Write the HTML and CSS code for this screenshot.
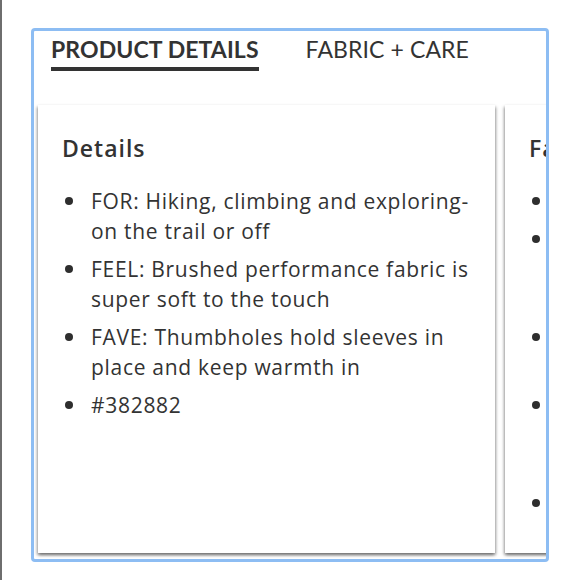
FILE: index.html
```html
<!DOCTYPE html>
<html>
<head>
<meta charset="utf-8">
<link rel="stylesheet" href="styles.css">
</head>
<body>
<div class="page">
  <div class="frame">
    <div class="tabs">
      <div class="tab active">PRODUCT DETAILS</div>
      <div class="tab">FABRIC + CARE</div>
    </div>
    <div class="cards">
      <div class="card">
        <h2 class="card-title">Details</h2>
        <ul class="list">
          <li>FOR: Hiking, climbing and exploring- on the trail or off</li>
          <li>FEEL: Brushed performance fabric is super soft to the touch</li>
          <li>FAVE: Thumbholes hold sleeves in place and keep warmth in</li>
          <li>#382882</li>
        </ul>
      </div>
      <div class="card">
        <h2 class="card-title">Fabric</h2>
        <ul class="list">
          <li>Nylon/spandex</li>
          <li>Brushed performance fabric with four-way stretch moves with you and feels soft on skin all day</li>
          <li>Wicks sweat and dries quickly to keep you comfy</li>
          <li>Flatlock seams reduce chafing and add comfort while you move around the trail</li>
          <li>Machine wash</li>
        </ul>
      </div>
    </div>
  </div>
</div>
</body>
</html>
```

FILE: styles.css
```css
html, body {
  margin: 0;
  padding: 0;
  background: #ffffff;
}
body {
  font-family: Lato, "Open Sans", sans-serif;
  color: #333333;
}
.page {
  width: 578px;
  height: 580px;
  border-left: 2px solid #6e6e6e;
  padding: 28px 0 0 29px;
  box-sizing: border-box;
}
.frame {
  width: 518px;
  height: 534px;
  box-sizing: border-box;
  border: 3px solid #8dbdf3;
  border-radius: 4px;
  overflow: hidden;
  display: flex;
  flex-direction: column;
}
.tabs {
  display: flex;
  gap: 47px;
  padding: 3px 0 0 17px;
  height: 71px;
  box-sizing: border-box;
}
.tab {
  font-size: 23px;
  line-height: 30px;
  color: #333333;
  letter-spacing: 0.1px;
  height: 33px;
}
.tab.active {
  font-weight: 700;
  border-bottom: 4px solid #333333;
}
.cards {
  display: flex;
  gap: 10px;
  padding: 3px 0 0 4px;
  flex: 1;
  min-height: 0;
}
.card {
  flex: 0 0 457px;
  height: 448px;
  box-sizing: border-box;
  background: #ffffff;
  box-shadow: -1px 2px 3px rgba(0, 0, 0, 0.35), 1px 2px 3px rgba(0, 0, 0, 0.35);
  padding: 28px 18px 0 24px;
}
.card-title {
  margin: 0 0 23px 0;
  font-family: "Open Sans", Lato, sans-serif;
  font-size: 23px;
  line-height: 30px;
  font-weight: 600;
  color: #333333;
  letter-spacing: 1px;
}
.list {
  margin: 0;
  padding: 0;
  list-style: none;
}
.list li {
  display: flex;
  font-family: "Open Sans", Lato, sans-serif;
  font-size: 21px;
  line-height: 30px;
  margin-bottom: 8px;
  color: #333333;
  letter-spacing: 0.7px;
}
.list li::before {
  content: "";
  flex: 0 0 8px;
  height: 8px;
  border-radius: 50%;
  background: #2e2e2e;
  margin: 11px 18px 0 3px;
}
```
